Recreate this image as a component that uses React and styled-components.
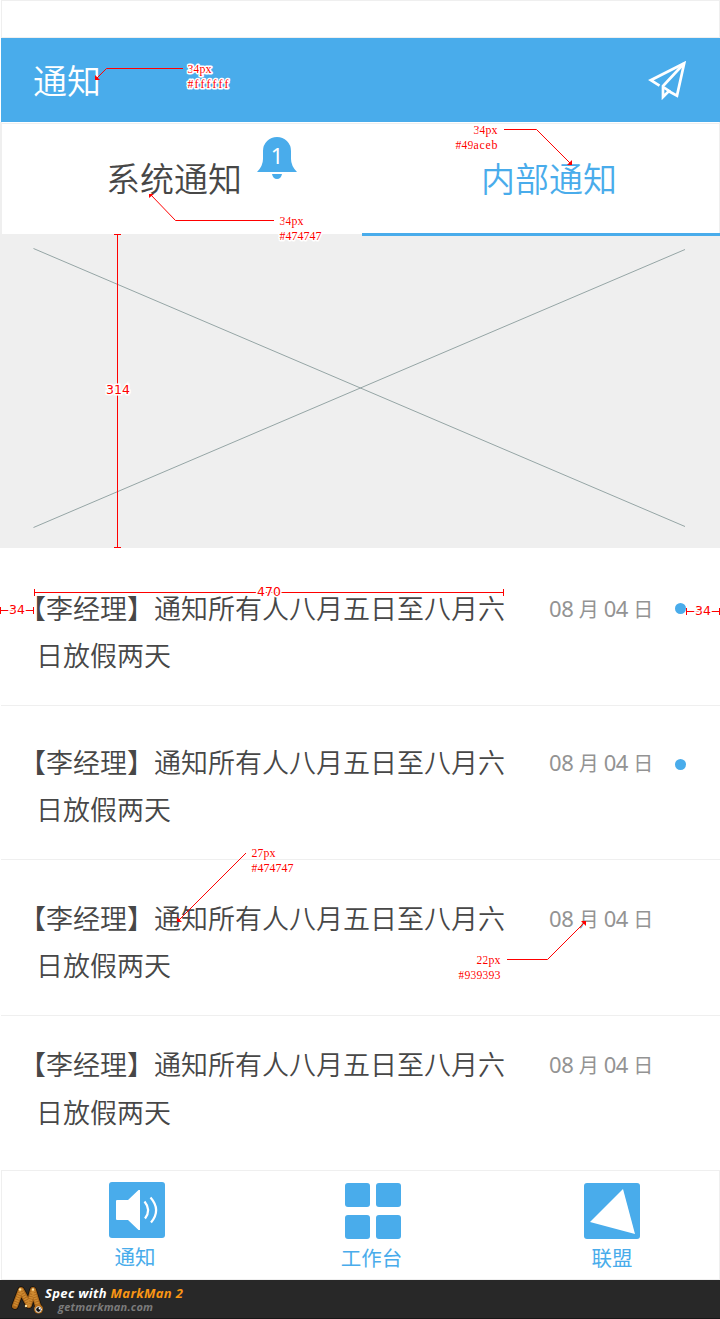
import React from "react";
import styled, { createGlobalStyle } from "styled-components";

const BLUE = "#49aceb";
const LINE = "#efefef";

const GlobalStyle = createGlobalStyle`
  * { box-sizing: border-box; }
  body { margin: 0; background: #fff; font-family: "Noto Sans", "Noto Sans CJK SC", sans-serif; font-weight: 350; }
  svg { display: block; }
`;

const Page = styled.div`
  position: relative;
  width: 720px;
  height: 1319px;
  display: flex;
  flex-direction: column;
  background: #fff;
  overflow: hidden;
`;

const StatusBar = styled.div`
  height: 38px;
  margin-left: 1px;
  border: 1px solid ${LINE};
`;

const Header = styled.header`
  height: 84px;
  margin-left: 1px;
  padding: 0 33px 0 32px;
  display: flex;
  align-items: center;
  justify-content: space-between;
  background: ${BLUE};
  color: #fff;
`;

const Title = styled.h1`
  margin: 2px 0 0;
  font-size: 34px;
  line-height: 50px;
  font-weight: 350;
`;

const Tabs = styled.nav`
  height: 112px;
  display: flex;
  border: solid ${LINE};
  border-width: 0 1px 0 2px;
  box-shadow: inset 0 1px 0 #fff, inset 0 2px 0 ${LINE};
`;

const Tab = styled.div`
  position: relative;
  width: ${(p) => p.$width}px;
  padding: 32px 0 0 ${(p) => p.$indent}px;
  display: flex;
  align-items: flex-start;
  font-size: 34px;
  line-height: 50px;
  white-space: nowrap;
  color: ${(p) => (p.$active ? BLUE : "#474747")};
  &::after {
    content: "";
    display: ${(p) => (p.$active ? "block" : "none")};
    position: absolute;
    left: 0;
    right: -1px;
    bottom: -2px;
    height: 3px;
    background: ${BLUE};
  }
`;

const Bell = styled.div`
  position: relative;
  width: 40px;
  height: 43px;
  margin: -17px 0 0 15px;
  svg { position: absolute; inset: 0; }
`;

const BellCount = styled.span`
  position: absolute;
  left: 0;
  right: 0;
  top: 3px;
  text-align: center;
  color: #fff;
  font-size: 22px;
  line-height: 30px;
  font-weight: 400;
`;

const Banner = styled.section`
  height: 314px;
  padding: 14px 34px 20px 33px;
  background: ${LINE};
`;

const List = styled.main`
  display: flex;
  flex-direction: column;
  margin-left: 1px;
`;

const Row = styled.article`
  height: ${(p) => p.$height}px;
  padding: ${(p) => p.$top}px 33px 0 18px;
  display: flex;
  align-items: flex-start;
  border-bottom: ${(p) => (p.$last ? "0" : `1px solid ${LINE}`)};
`;

const Message = styled.p`
  width: 490px;
  margin: 0;
  padding-left: 17px;
  text-indent: -17px;
  font-size: 27px;
  line-height: ${(p) => p.$leading}px;
  color: #474747;
  white-space: nowrap;
`;

const DateText = styled.time`
  width: 126px;
  padding-left: 40px;
  font-size: 22px;
  line-height: 46px;
  letter-spacing: -0.4px;
  font-weight: 400;
  color: #939393;
  white-space: nowrap;
`;

const Han = styled.span`
  font-size: 20px;
`;

const Dot = styled.i`
  width: 11px;
  height: 11px;
  margin: ${(p) => p.$drop}px 1px 0 auto;
  border-radius: 50%;
  background: ${BLUE};
`;

const BottomNav = styled.nav`
  height: 110px;
  margin-left: 1px;
  border: 1px solid ${LINE};
  display: flex;
`;

const NavItem = styled.div`
  width: ${(p) => p.$width}px;
  padding-top: ${(p) => p.$top}px;
  display: flex;
  flex-direction: column;
  align-items: center;
  font-size: 20.5px;
  line-height: 30px;
  font-weight: 400;
  color: ${BLUE};
  &:last-child { margin-left: auto; }
`;

const NavLabel = styled.span`
  margin: 4px ${(p) => p.$shift || 0}px 0 0;
`;

const Footer = styled.footer`
  height: 39px;
  padding: 4px 0 0 11px;
  display: flex;
  background: #282828;
  border-bottom: 1px solid #181818;
`;

const Credit = styled.div`
  margin: 1px 0 0 1px;
  font-family: "Open Sans", sans-serif;
  font-style: italic;
  font-weight: 700;
  font-size: 13px;
  line-height: 16px;
  letter-spacing: 0.34px;
  color: #fff;
  white-space: nowrap;
  em { color: #fa9614; }
  small {
    display: block;
    margin: -2px 0 0 13px;
    font-size: 11px;
    line-height: 15px;
    letter-spacing: 0.24px;
    color: #7b7b7b;
  }
`;

const Spec = styled.svg`
  position: absolute;
  left: 0;
  top: 0;
  pointer-events: none;
`;

const Label = styled.text`
  font-family: "Liberation Serif", serif;
  font-size: 12px;
  font-weight: 400;
  fill: #f00;
  stroke: #fff;
  stroke-width: 3px;
  stroke-linejoin: round;
  paint-order: stroke;
`;

const Measure = styled.text`
  font-family: "DejaVu Sans", sans-serif;
  font-size: 12.5px;
  font-weight: 400;
  fill: #f00;
  stroke: #fff;
  stroke-width: 3px;
  paint-order: stroke;
  text-anchor: middle;
`;

const rows = [
  { height: 158, top: 37, leading: 47, drop: 18, unread: true },
  { height: 154, top: 33, leading: 47, drop: 20, unread: true },
  { height: 156, top: 35, leading: 47, unread: false },
  { height: 154, top: 25, leading: 48, unread: false },
];

const notes = [
  { x: 187, y: 73, color: "#ffffff", size: "34px", path: "M183 68.5H106.5L97 78", tip: "M95 80v-5l5 5z" },
  { x: 279, y: 225, color: "#474747", size: "34px", path: "M274 220.5H175.5L151 195", tip: "M149 198v-4h5z" },
  { x: 497, y: 134, color: "#49aceb", size: "34px", end: true, path: "M504 129.5H536.5L570 163", tip: "M567 165h5v-5z" },
  { x: 251, y: 857, color: "#474747", size: "27px", path: "M246 853L178 921", tip: "M177 922v-5l5 5z" },
  { x: 500, y: 964, color: "#939393", size: "22px", end: true, path: "M507 959.5H547.5L585 922", tip: "M581 921h5v5z" },
];

/* Places every character of a note on a fixed 6px grid. */
const CELL = 6;
function NoteText({ x, y, end, text }) {
  const start = end ? x - text.length * CELL : x;
  const xs = [...text].map((ch, i) => start + i * CELL + (ch === "f" ? 1.5 : 0.5)).join(" ");
  return <Label x={xs} y={y}>{text}</Label>;
}

function PlaneIcon() {
  return (
    <svg width="40" height="40" viewBox="647 60 40 40" fill="none" stroke="#fff" strokeWidth="2.7">
      <path d="M659.500 85.700L650.800 80.200L684.200 63.200L677 95.600L667.500 90.500" />
      <path d="M684 63.500L663 86V97L669 91L664 87.500" />
    </svg>
  );
}

function SpeakerIcon() {
  return (
    <svg width="56" height="56" viewBox="0 0 56 56">
      <rect width="56" height="56" rx="3" fill={BLUE} />
      <path d="M8 18H19L29.5 8H31V48H29.5L19 38H8Q7 38 7 37V19Q7 18 8 18Z" fill="#fff" />
      <path d="M35.500 19.500Q42.500 28 36 36.500M41.500 15.500Q52.500 28 42 40.500" fill="none" stroke="#fff" strokeWidth="2.2" />
    </svg>
  );
}

function GridIcon() {
  return (
    <svg width="56" height="56" viewBox="0 0 56 56" fill={BLUE}>
      <rect width="25" height="24" rx="3" />
      <rect x="31" width="25" height="24" rx="3" />
      <rect y="32" width="25" height="24" rx="3" />
      <rect x="31" y="32" width="25" height="24" rx="3" />
    </svg>
  );
}

function TriangleIcon() {
  return (
    <svg width="56" height="56" viewBox="0 0 56 56">
      <rect width="56" height="56" rx="3" fill={BLUE} />
      <path d="M39 6L51 51L6 39Z" fill="#fff" />
    </svg>
  );
}

function MarkManLogo() {
  const body = "M4 22L10 6L18 21L22 6L27 22";
  return (
    <svg width="33" height="32" viewBox="0 0 33 32" fill="none" strokeLinecap="round" strokeLinejoin="round">
      <path d={body} stroke="#15100a" strokeWidth="7.500" />
      <path d={body} stroke="#a9661b" strokeWidth="6" />
      <path d={body} stroke="#cf8a30" strokeWidth="4" strokeDasharray="1.6 0.8" strokeLinecap="butt" />
      <circle cx="9" cy="5.500" r="1.200" fill="#ffe3a0" />
      <circle cx="22" cy="5.500" r="1.200" fill="#ffe3a0" />
      <circle cx="15" cy="22" r="1.200" fill="#ffe3a0" />
      <circle cx="27.500" cy="25" r="4.500" fill="#b96e18" />
      <circle cx="27.500" cy="25.500" r="2.800" fill="#111" stroke="#eee" strokeWidth="1" />
      <circle cx="28.500" cy="24.500" r="0.900" fill="#fff" />
    </svg>
  );
}

function SpecLayer() {
  return (
    <Spec width="720" height="1319" viewBox="0 0 720 1319">
      {notes.map((n) => (
        <g key={n.path}>
          <path d={n.path} fill="none" stroke="#f00" />
          <path d={n.tip} fill="#f00" />
          <NoteText x={n.x} y={n.y} end={n.end} text={n.size} />
          <NoteText x={n.x} y={n.y + 15} end={n.end} text={n.color} />
        </g>
      ))}
      <path d="M114 234.500H121M117.500 234V547M114 547.500H121" stroke="#f00" />
      <path d="M34.500 589V596M34 592.500H504M503.500 589V596" stroke="#f00" />
      <path d="M0.500 607V614M0 610.500H34M33.500 607V614" stroke="#f00" />
      <path d="M686.500 608V615M686 611.500H720M719.500 608V615" stroke="#f00" />
      <Measure x="118" y="394">314</Measure>
      <Measure x="269" y="596">470</Measure>
      <Measure x="17" y="614">34</Measure>
      <Measure x="703" y="615">34</Measure>
    </Spec>
  );
}

export default function App() {
  return (
    <Page>
      <GlobalStyle />
      <StatusBar />
      <Header>
        <Title>通知</Title>
        <PlaneIcon />
      </Header>
      <Tabs>
        <Tab $width={360} $indent={104}>
          系统通知
          <Bell>
            <svg width="40" height="43" viewBox="0 0 40 43" fill={BLUE}>
              <path d="M0 35Q6 29 6 22V14A14 14 0 0 1 34 14V22Q34 29 40 35Z" />
              <path d="M15 37H25Q24 42 20 42Q16 42 15 37Z" />
            </svg>
            <BellCount>1</BellCount>
          </Bell>
        </Tab>
        <Tab $active $width={357} $indent={119}>内部通知</Tab>
      </Tabs>
      <Banner>
        <svg width="653" height="280" viewBox="33 248 653 280" stroke="#95a5a5" strokeWidth="1">
          <path d="M33.500 248.500L685 526.500M33.500 527.500L685 249.500" />
        </svg>
      </Banner>
      <List>
        {rows.map((r, i) => (
          <Row key={i} $height={r.height} $top={r.top} $last={i === rows.length - 1}>
            <Message $leading={r.leading}>
              【李经理】通知所有人八月五日至八月六
              <br />
              日放假两天
            </Message>
            <DateText>
              08 <Han>月</Han> 04 <Han>日</Han>
            </DateText>
            {r.unread && <Dot $drop={r.drop} />}
          </Row>
        ))}
      </List>
      <BottomNav>
        <NavItem $width={270} $top={11}><SpeakerIcon /><NavLabel $shift={4}>通知</NavLabel></NavItem>
        <NavItem $width={202} $top={12}><GridIcon /><NavLabel $shift={3}>工作台</NavLabel></NavItem>
        <NavItem $width={214} $top={12}><TriangleIcon /><NavLabel>联盟</NavLabel></NavItem>
      </BottomNav>
      <Footer>
        <MarkManLogo />
        <Credit>
          Spec with <em>MarkMan 2</em>
          <small>getmarkman.com</small>
        </Credit>
      </Footer>
      <SpecLayer />
    </Page>
  );
}
